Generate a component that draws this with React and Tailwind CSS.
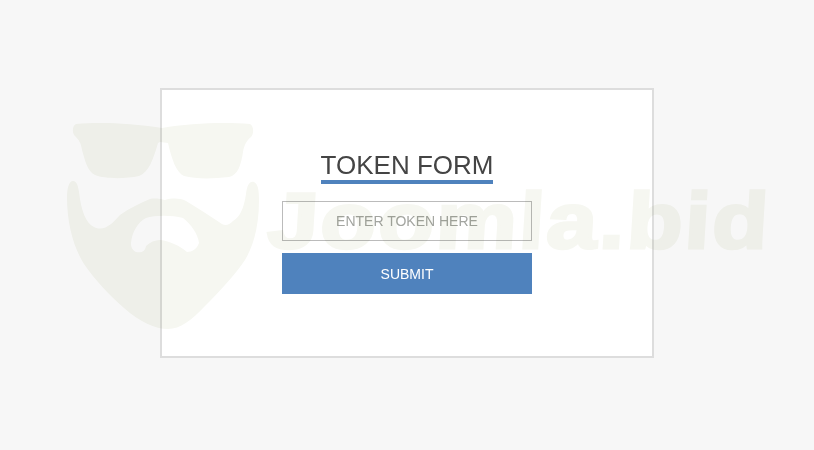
// App.jsx
const Watermark = () => (
  <div className="absolute inset-0 pointer-events-none mix-blend-multiply text-[#f6f7f1]">
    <svg className="absolute left-[60px] top-[118px]" width="205" height="216" viewBox="60 118 205 216" fill="currentColor">
      {/* lunettes */}
      <path d="M76 124 C100 122 130 123 162 128 C190 123 225 122 250 124 C254 126 254 134 251 137 C246 141 244 146 243 152 C241 165 238 175 229 177 C212 179 195 179 184 176 C176 172 172 160 168 143 L160 142 L158 143 C153 160 149 172 139 176 C125 179 105 179 95 175 C87 171 85 160 82 150 C81 143 79 140 75 136 C72 133 72 126 76 124 Z" />
      {/* barbe */}
      <path fillRule="evenodd" d="M73 181 C77 181 78 186 79 192 C81 210 86 224 94 227 C104 232 112 224 120 215 C130 208 140 203 150 199 C155 198 161 199 165 200 C172 198 180 198 186 201 C196 207 207 214 219 222 C224 226 228 226 233 221 C240 217 244 208 246 194 C247 186 249 181 254 182 C258 184 259 190 259 200 C259 225 254 245 245 260 C235 275 218 293 205 306 C192 320 180 329 168 329 C155 329 140 322 124 308 C110 296 95 280 84 264 C74 248 67 225 67 197 C67 188 69 181 73 181 Z M131 243 C132 232 138 222 146 218 C155 215 172 215 183 218 C191 224 198 234 199 243 C197 249 192 252 187 252 C180 246 170 241 160 240 C155 240 150 242 146 246 C145 252 141 253 136 252 C132 250 131 247 131 243 Z" />
    </svg>
    <span className="absolute left-[265px] top-[173px] font-bold text-[79px] leading-[96px] tracking-[2px] whitespace-nowrap scale-x-[1.15] -skew-x-3 origin-bottom-left [-webkit-text-stroke:3px_currentColor]">
      Joomla.bid
    </span>
  </div>
);

const App = () => {
  return (
    <div className="relative h-[450px] overflow-hidden bg-[#f7f7f7] pt-[88px] font-['Liberation_Sans',sans-serif]">
      <div className="mx-auto w-[494px] h-[270px] bg-white border-2 border-[#dddddd] flex flex-col items-center pt-[60px]">
        <h2 className="text-[26px] leading-[30px] text-[#444444] border-b-4 border-[#4f82bd]">TOKEN FORM</h2>
        <input
          type="text"
          placeholder="ENTER TOKEN HERE"
          className="mt-[17px] w-[250px] h-10 border border-[#bbbbbb] bg-transparent text-center text-sm placeholder:text-[#a3a5a0] outline-none"
        />
        <button className="mt-3 w-[250px] h-[41px] bg-[#4f82bd] text-white text-sm">SUBMIT</button>
      </div>
      <Watermark />
    </div>
  );
};

export default App;
